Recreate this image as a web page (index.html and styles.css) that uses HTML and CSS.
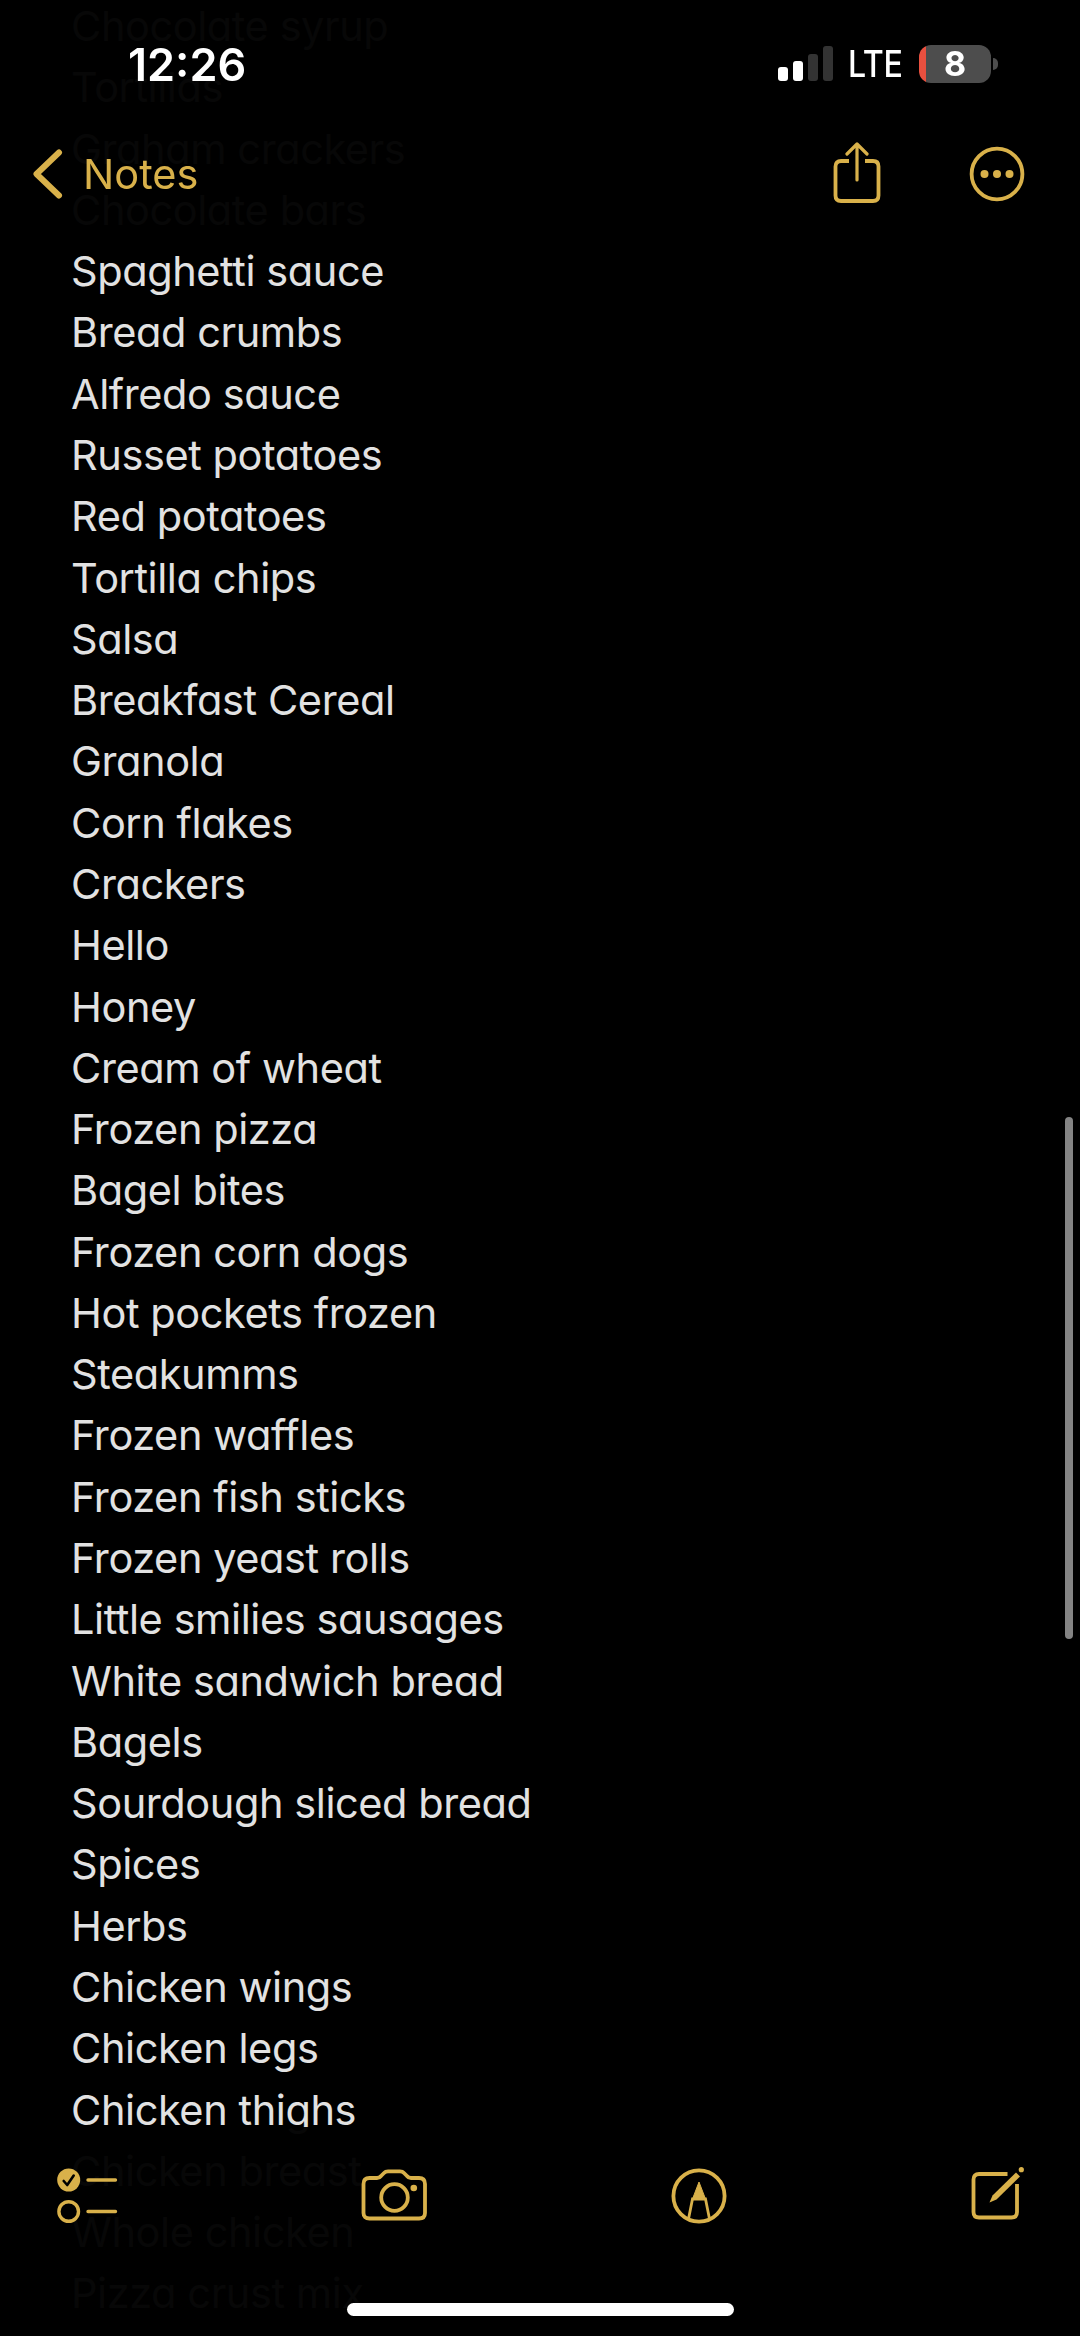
FILE: index.html
```html
<!DOCTYPE html>
<html lang="en">
<head>
  <meta charset="UTF-8" />
  <meta name="viewport" content="width=device-width, initial-scale=1" />
  <title>Notes</title>
  <link rel="stylesheet" href="styles.css">
</head>
<body>
  <header class="top-bar">
    <div class="status">
      <span class="time">12:26</span>
      <div class="status-right">
        <svg class="signal" width="56" height="36" viewBox="0 0 56 36">
          <rect x="0" y="21" width="10" height="14" rx="3" fill="#fff"/>
          <rect x="15" y="15" width="10" height="20" rx="3" fill="#fff"/>
          <rect x="30" y="8" width="10" height="27" rx="3" fill="#333"/>
          <rect x="45" y="0" width="10" height="35" rx="3" fill="#333"/>
        </svg>
        <span class="network">LTE</span>
        <div class="battery"><span>8</span></div>
        <i class="battery-cap"></i>
      </div>
    </div>
    <nav class="nav">
      <a class="back">
        <svg width="30" height="52" viewBox="0 0 30 52">
          <path d="M26 4.500L3.500 26L26 47.500" fill="none" stroke="currentColor" stroke-width="6" stroke-linecap="round" stroke-linejoin="round"/>
        </svg>
        <span>Notes</span>
      </a>
      <div class="nav-actions">
        <svg width="50" height="64" viewBox="0 0 50 64" fill="none" stroke="currentColor" stroke-width="3.8" stroke-linecap="round" stroke-linejoin="round">
          <path d="M17 19H9Q3.500 19 3.500 24.500V53.500Q3.500 59 9 59H41Q46.500 59 46.500 53.500V24.500Q46.500 19 41 19H33" stroke-linecap="butt"/>
          <path d="M25 38V2.500M15 12L25 2L35 12" stroke-width="3.200"/>
        </svg>
        <svg width="56" height="56" viewBox="0 0 56 56" fill="currentColor">
          <circle cx="28" cy="28" r="25.400" fill="none" stroke="currentColor" stroke-width="3.800"/>
          <circle cx="15.500" cy="28" r="4"/>
          <circle cx="28" cy="28" r="4"/>
          <circle cx="40.500" cy="28" r="4"/>
        </svg>
      </div>
    </nav>
  </header>

  <main class="note">
    <div>Chocolate syrup</div>
    <div>Tortillas</div>
    <div>Graham crackers</div>
    <div>Chocolate bars</div>
    <div>Spaghetti sauce</div>
    <div>Bread crumbs</div>
    <div>Alfredo sauce</div>
    <div>Russet potatoes</div>
    <div>Red potatoes</div>
    <div>Tortilla chips</div>
    <div>Salsa</div>
    <div>Breakfast Cereal</div>
    <div>Granola</div>
    <div>Corn flakes</div>
    <div>Crackers</div>
    <div>Hello</div>
    <div>Honey</div>
    <div>Cream of wheat</div>
    <div>Frozen pizza</div>
    <div>Bagel bites</div>
    <div>Frozen corn dogs</div>
    <div>Hot pockets frozen</div>
    <div>Steakumms</div>
    <div>Frozen waffles</div>
    <div>Frozen fish sticks</div>
    <div>Frozen yeast rolls</div>
    <div>Little smilies sausages</div>
    <div>White sandwich bread</div>
    <div>Bagels</div>
    <div>Sourdough sliced bread</div>
    <div>Spices</div>
    <div>Herbs</div>
    <div>Chicken wings</div>
    <div>Chicken legs</div>
    <div>Chicken thighs</div>
    <div>Chicken breast</div>
    <div>Whole chicken</div>
    <div>Pizza crust mix</div>
  </main>

  <div class="scrollbar"></div>

  <footer class="bottom-bar">
    <div class="tools">
      <svg width="62" height="60" viewBox="0 0 62 60" fill="none" stroke="currentColor" stroke-width="3.400" stroke-linecap="round" stroke-linejoin="round">
        <circle cx="12.700" cy="14" r="11.500" fill="currentColor" stroke="none"/>
        <path d="M7.700 15L11.200 19L17.700 9.500" stroke="#000" stroke-width="2.600"/>
        <path d="M32 14H59.500M32 45.500H59.500"/>
        <circle cx="12.700" cy="45.500" r="9.800"/>
      </svg>
      <svg width="68" height="60" viewBox="0 0 68 60" fill="none" stroke="currentColor" stroke-width="3.800" stroke-linejoin="round">
        <path d="M8.500 12H16Q18.500 12 20 10L23 7Q24.500 5.300 27 5.300H39Q41.500 5.300 43 7L46 10Q47.500 12 50 12H58Q64 12 64 18V47Q64 52.500 58 52.500H8.500Q2.500 52.500 2.500 47V18Q2.500 12 8.500 12Z"/>
        <circle cx="33.500" cy="31.500" r="13.300"/>
        <circle cx="52.800" cy="22" r="3.300" fill="currentColor" stroke="none"/>
      </svg>
      <svg width="56" height="56" viewBox="0 0 56 56" fill="none" stroke="currentColor">
        <circle cx="28" cy="28" r="25.600" stroke-width="3.800"/>
        <path d="M28 14L34.500 31H21.500Z" fill="currentColor" stroke-width="1"/>
        <path d="M17.500 51L21.500 31H34.500L38.500 51" stroke-width="2.800"/>
      </svg>
      <svg width="54" height="58" viewBox="0 0 54 58" fill="none" stroke="currentColor" stroke-width="3.800">
        <path d="M37.500 7H9Q3.500 7 3.500 12.500V45Q3.500 50.500 9 50.500H41.500Q47 50.500 47 45V17"/>
        <path d="M46 5.500L50 9.500L26.500 32.500L19.500 35.500L22.500 28.500Z" fill="currentColor" stroke="none"/>
        <circle cx="51.300" cy="2.700" r="2.600" fill="currentColor" stroke="none"/>
      </svg>
    </div>
    <div class="home-indicator"></div>
  </footer>
</body>
</html>
```

FILE: styles.css
```css
:root {
  --gold: #d9b14a;
  --bar: rgba(0, 0, 0, 0.972);
}

* {
  box-sizing: border-box;
}

body {
  margin: 0;
  height: 2336px;
  overflow: hidden;
  background: #000;
  color: #e2e2e2;
  font-family: Inter, "Liberation Sans", sans-serif;
  font-feature-settings: "cv11";
}

svg {
  display: block;
  flex: none;
}

/* the bars lie over the scrolled note */
.top-bar,
.bottom-bar {
  position: fixed;
  left: 0;
  right: 0;
  z-index: 1;
  background: var(--bar);
  color: var(--gold);
}

.top-bar {
  top: 0;
  height: 244px;
}

.status {
  display: flex;
  justify-content: space-between;
  padding: 40px 82px 0 128px;
  color: #fff;
}

.time {
  font-size: 45px;
  font-weight: 600;
  line-height: 50px;
}

.status-right {
  display: flex;
  align-items: center;
  height: 47px;
}

.network {
  margin-left: 6px;
  font-size: 37px;
  font-weight: 500;
  letter-spacing: -0.5px;
  transform: scaleX(0.87);
  transform-origin: right;
}

.battery {
  width: 72px;
  height: 38px;
  margin-left: 17px;
  border-radius: 12px;
  background: linear-gradient(90deg, #e9503f 7px, #4d4d4d 7px);
  text-align: center;
  font-size: 34px;
  font-weight: 700;
  line-height: 38px;
}

.battery-cap {
  width: 5px;
  height: 12px;
  margin-left: 2px;
  border-radius: 0 5px 5px 0;
  background: #4d4d4d;
}

.nav {
  display: flex;
  justify-content: space-between;
  align-items: center;
  height: 70px;
  margin-top: 49px;
  padding: 0 55px 0 33px;
}

.back {
  display: flex;
  align-items: center;
  gap: 20px;
  font-size: 41.5px;
}

.nav-actions {
  display: flex;
  align-items: center;
  gap: 87px;
}

.note {
  margin-top: -4px;
  padding-left: 71px;
  font-size: 41.5px;
  line-height: 61.28px;
  letter-spacing: -0.42px;
  white-space: nowrap;
}

.scrollbar {
  position: fixed;
  top: 1117px;
  right: 7px;
  width: 8px;
  height: 522px;
  border-radius: 4px;
  background: #848484;
}

.bottom-bar {
  bottom: 0;
  height: 209px;
}

.tools {
  display: flex;
  justify-content: space-between;
  align-items: center;
  height: 137px;
  padding: 0 56px;
}

.home-indicator {
  width: 387px;
  height: 13px;
  margin: 39px auto 0;
  border-radius: 7px;
  background: #fff;
}
```
